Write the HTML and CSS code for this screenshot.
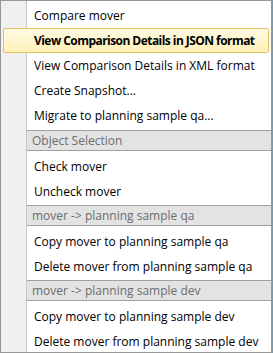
FILE: index.html
```html
<!DOCTYPE html>
<html>
<head>
  <title>Context Menu</title>
  <link rel="stylesheet" href="styles.css">
</head>
<body>
  <div class="menu">
    <div class="group">
      <div class="item">Compare mover</div>
      <div class="item active">View Comparison Details in JSON format</div>
      <div class="item">View Comparison Details in XML format</div>
      <div class="item">Create Snapshot...</div>
      <div class="item">Migrate to planning sample qa...</div>
    </div>

    <div class="header">Object Selection</div>
    <div class="group">
      <div class="item">Check mover</div>
      <div class="item">Uncheck mover</div>
    </div>

    <div class="header">mover -&gt; planning sample qa</div>
    <div class="group">
      <div class="item">Copy mover to planning sample qa</div>
      <div class="item">Delete mover from planning sample qa</div>
    </div>

    <div class="header">mover -&gt; planning sample dev</div>
    <div class="group">
      <div class="item">Copy mover to planning sample dev</div>
      <div class="item">Delete mover from planning sample dev</div>
    </div>
  </div>
</body>
</html>
```

FILE: styles.css
```css
body {
  margin: 0;
  background-color: #7d9aab;
  font-family: "Open Sans", "Noto Sans", sans-serif;
  font-size: 12px;
}

.menu {
  width: 270px;
  height: 351px;
  border: 1px solid #979797;
  background: linear-gradient(to right, #f0f0f0 0, #f0f0f0 25px, #c8c8c8 25px, #c8c8c8 26px, #ffffff 26px);
  overflow: hidden;
}

.group {
  padding: 3px 0 1px;
}

.group:first-child {
  padding: 2px 0;
}

.item {
  height: 23px;
  line-height: 24px;
  margin: 0 2px;
  padding-left: 30px;
  border: 1px solid transparent;
  color: #000;
  white-space: nowrap;
}

/* hovered row */
.item.active {
  font-weight: bold;
  letter-spacing: -0.55px;
  border-color: #e5c365;
  border-radius: 2px;
  background: linear-gradient(to bottom, #fffbe3, #fef0b6);
}

.header {
  margin-left: 26px;
  height: 19px;
  line-height: 19px;
  padding-left: 5px;
  background-color: #e3e3e3;
  border-top: 1px solid #a0a0a0;
  border-bottom: 1px solid #a0a0a0;
  color: #6d6d6d;
  white-space: nowrap;
}
```
